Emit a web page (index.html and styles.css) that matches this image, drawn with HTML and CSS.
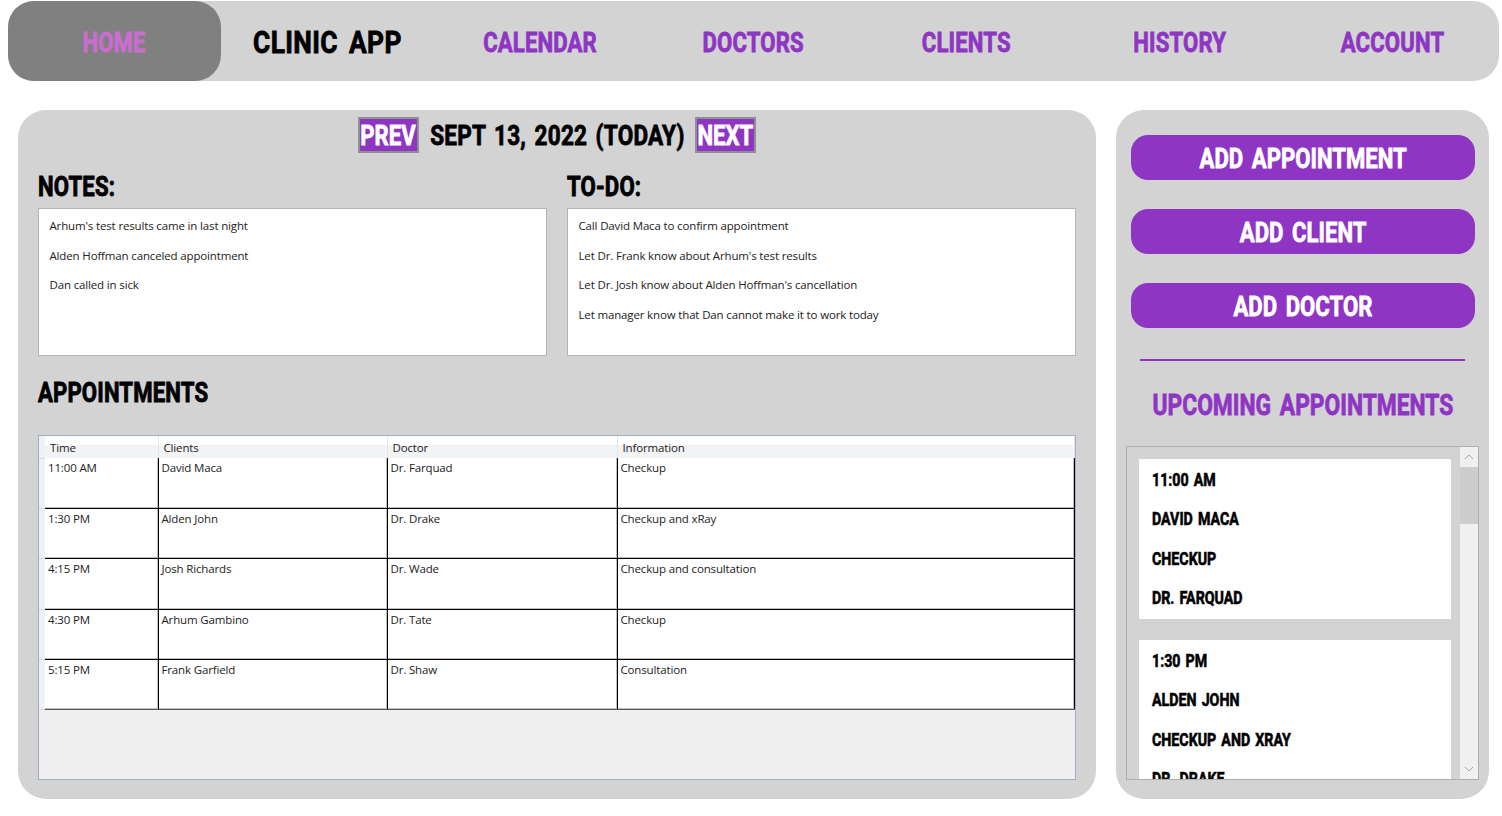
FILE: index.html
```html
<!DOCTYPE html>
<html lang="en">
<head>
<meta charset="utf-8">
<title>Clinic App</title>
<link rel="stylesheet" href="styles.css">
</head>
<body>
<nav class="nav">
  <a class="nav-item active"><span class="sq">HOME</span></a>
  <a class="nav-item brand"><span class="sq">CLINIC APP</span></a>
  <a class="nav-item"><span class="sq">CALENDAR</span></a>
  <a class="nav-item"><span class="sq">DOCTORS</span></a>
  <a class="nav-item"><span class="sq">CLIENTS</span></a>
  <a class="nav-item"><span class="sq">HISTORY</span></a>
  <a class="nav-item"><span class="sq">ACCOUNT</span></a>
</nav>
<main class="content">
  <section class="panel main-panel">
    <div class="date-row">
      <button class="step"><span class="sq">PREV</span></button>
      <div class="date"><span class="sq date-text">SEPT 13, 2022 (TODAY)</span></div>
      <button class="step"><span class="sq">NEXT</span></button>
    </div>
    <div class="notes">
      <div class="note-col">
        <h2 class="heading"><span class="sq left">NOTES:</span></h2>
        <div class="note-box">
          <p>Arhum's test results came in last night</p>
          <p>Alden Hoffman canceled appointment</p>
          <p>Dan called in sick</p>
        </div>
      </div>
      <div class="note-col">
        <h2 class="heading"><span class="sq left">TO-DO:</span></h2>
        <div class="note-box">
          <p>Call David Maca to confirm appointment</p>
          <p>Let Dr. Frank know about Arhum's test results</p>
          <p>Let Dr. Josh know about Alden Hoffman's cancellation</p>
          <p>Let manager know that Dan cannot make it to work today</p>
        </div>
      </div>
    </div>
    <h2 class="heading appts"><span class="sq left">APPOINTMENTS</span></h2>
    <div class="grid-wrap">
      <table class="grid">
        <colgroup><col class="c0"><col class="c1"><col class="c2"><col class="c3"><col></colgroup>
        <thead>
          <tr><th class="rowhead"></th><th>Time</th><th>Clients</th><th>Doctor</th><th>Information</th></tr>
        </thead>
        <tbody>
          <tr class="r50"><td class="rowhead"></td><td>11:00 AM</td><td>David Maca</td><td>Dr. Farquad</td><td>Checkup</td></tr>
          <tr class="r50"><td class="rowhead"></td><td>1:30 PM</td><td>Alden John</td><td>Dr. Drake</td><td>Checkup and xRay</td></tr>
          <tr class="r51"><td class="rowhead"></td><td>4:15 PM</td><td>Josh Richards</td><td>Dr. Wade</td><td>Checkup and consultation</td></tr>
          <tr class="r50"><td class="rowhead"></td><td>4:30 PM</td><td>Arhum Gambino</td><td>Dr. Tate</td><td>Checkup</td></tr>
          <tr class="r50"><td class="rowhead"></td><td>5:15 PM</td><td>Frank Garfield</td><td>Dr. Shaw</td><td>Consultation</td></tr>
        </tbody>
      </table>
    </div>
  </section>
  <aside class="panel side-panel">
    <button class="action"><span class="sq">ADD APPOINTMENT</span></button>
    <button class="action"><span class="sq">ADD CLIENT</span></button>
    <button class="action"><span class="sq">ADD DOCTOR</span></button>
    <hr class="rule">
    <h2 class="upcoming"><span class="sq">UPCOMING APPOINTMENTS</span></h2>
    <div class="list-box">
      <div class="list">
        <div class="card">
          <p><span class="sq left">11:00 AM</span></p><p><span class="sq left">DAVID MACA</span></p><p><span class="sq left">CHECKUP</span></p><p><span class="sq left">DR. FARQUAD</span></p>
        </div>
        <div class="card">
          <p><span class="sq left">1:30 PM</span></p><p><span class="sq left">ALDEN JOHN</span></p><p><span class="sq left">CHECKUP AND XRAY</span></p><p><span class="sq left">DR. DRAKE</span></p>
        </div>
      </div>
      <div class="scrollbar">
        <div class="sb-btn"><svg width="10" height="6" viewBox="0 0 10 6"><path d="M1 5l4-4 4 4" fill="none" stroke="#a6a6a6" stroke-width="1"/></svg></div>
        <div class="sb-thumb"></div>
        <div class="sb-track"></div>
        <div class="sb-btn"><svg width="10" height="6" viewBox="0 0 10 6"><path d="M1 1l4 4 4-4" fill="none" stroke="#a6a6a6" stroke-width="1"/></svg></div>
      </div>
    </div>
  </aside>
</main>
</body>
</html>
```
FILE: styles.css
```css
* { box-sizing: border-box; }
html, body { margin: 0; height: 100%; }
body {
  background: #fff;
  padding: 1px 3px 0 8px;
  overflow: hidden;
  font-family: "Roboto", "Liberation Sans", sans-serif;
  font-weight: 700;
}
p, h2 { margin: 0; }

/* The display face is narrower than anything installed: condense it. */
.sq {
  display: inline-block;
  flex: none;
  white-space: nowrap;
  transform: scaleX(0.79);
}
.sq.left { transform-origin: left center; }

.nav {
  display: grid;
  grid-template-columns: repeat(7, 1fr);
  height: 80px;
  background: #d3d3d3;
  border-radius: 26px;
}
.nav-item {
  display: flex;
  align-items: center;
  justify-content: center;
  padding-top: 2px;
  font-size: 28px;
  color: #8e35c4;
  letter-spacing: 0.2px;
  -webkit-text-stroke: 0.8px currentColor;
}
.nav-item.active {
  background: #808080;
  color: #c96ed0;
  border-radius: 26px;
}
.nav-item.brand {
  color: #000;
  font-size: 31px;
  word-spacing: 5px;
  letter-spacing: 0.4px;
}
.nav-item.brand .sq { transform: scaleX(0.85); }

.content {
  display: grid;
  grid-template-columns: 1078px 373px;
  grid-template-rows: 689px;
  column-gap: 20px;
  margin: 29px 0 0 10px;
  height: 689px;
}
.panel {
  background: #d3d3d3;
  border-radius: 28px;
}

.main-panel {
  padding: 7px 20px 0;
  display: flex;
  flex-direction: column;
}
.date-row {
  display: flex;
  align-items: center;
  justify-content: center;
  gap: 10px;
  height: 36px;
}
.step {
  display: flex;
  align-items: center;
  justify-content: center;
  width: 61px;
  height: 36px;
  padding: 0;
  background: #8e35c4;
  color: #fff;
  border: 2px solid #8f8f8f;
  font: inherit;
  font-size: 28px;
  -webkit-text-stroke: 0.8px currentColor;
}
.date {
  display: flex;
  justify-content: center;
  width: 256px;
  padding-top: 2px;
  font-size: 27px;
  color: #000;
  letter-spacing: 0.3px;
  word-spacing: 3px;
  -webkit-text-stroke: 0.8px currentColor;
}
.date-text { transform: scaleX(0.835); }
.notes {
  display: grid;
  grid-template-columns: 1fr 1fr;
  column-gap: 20px;
  margin-top: 18px;
}
.heading {
  font-size: 28px;
  font-weight: 700;
  line-height: 32px;
  color: #000;
  letter-spacing: 0.2px;
  -webkit-text-stroke: 0.9px currentColor;
}
.note-box {
  height: 148px;
  margin-top: 5px;
  padding: 3px 10.5px;
  background: #fff;
  border: 1px solid #b4b4b4;
  font-family: "Open Sans", sans-serif;
  font-weight: 400;
  font-size: 11.5px;
  letter-spacing: -0.15px;
  color: #222;
}
.note-box p {
  height: 29.5px;
  line-height: 27px;
}
.appts { margin-top: 21px; }

.grid-wrap {
  margin-top: 26px;
  height: 345px;
  background: #efefef;
  border: 1px solid #9fb0c6;
  font-family: "Open Sans", sans-serif;
  font-weight: 400;
}
.grid {
  border-collapse: collapse;
  table-layout: fixed;
  width: 100%;
  font-size: 11.5px;
  letter-spacing: -0.15px;
  color: #222;
}
.c0 { width: 6px; }
.c1 { width: 113px; }
.c2 { width: 229px; }
.c3 { width: 230px; }
.grid th {
  height: 22px;
  padding: 1px 0 0 5px;
  font-weight: 400;
  text-align: left;
  background: linear-gradient(#fff 0, #fff 40%, #f2f3f5 40%, #f2f3f5 100%);
  border-right: 1px solid #e3e5e8;
}
.grid th.rowhead, .grid td.rowhead {
  background: #f0f1f3;
  border: 0;
  border-bottom: 1px solid #d8d8d8;
  box-shadow: none;
  padding: 0;
}
.grid td {
  padding: 0 3px;
  vertical-align: top;
  background: #fff;
  line-height: 19px;
  border-right: 1px solid #000;
  border-bottom: 1px solid #000;
  box-shadow: inset -1px -1px 0 rgba(0, 0, 0, 0.25);
}
.grid tbody tr:last-child td:not(.rowhead) { border-bottom-color: #555; }
.r50 { height: 50px; }
.r51 { height: 51px; }

.side-panel {
  padding: 25px 14px 0 15px;
  display: flex;
  flex-direction: column;
  align-items: stretch;
}
.action {
  display: flex;
  align-items: center;
  justify-content: center;
  height: 45px;
  margin-bottom: 29px;
  padding: 2px 0 0;
  background: #8e35c4;
  color: #fff;
  border: 0;
  border-radius: 17px;
  font: inherit;
  font-size: 28px;
  word-spacing: 4px;
  -webkit-text-stroke: 0.8px currentColor;
}
.rule {
  width: 325px;
  height: 2px;
  margin: 2px 0 0 9px;
  background: #8e35c4;
  border: 0;
}
.upcoming {
  display: flex;
  justify-content: center;
  margin-top: 24px;
  font-size: 30px;
  line-height: 40px;
  font-weight: 700;
  color: #8e35c4;
  word-spacing: 4px;
  -webkit-text-stroke: 0.8px currentColor;
}
.upcoming .sq { transform: scaleX(0.76); }
.list-box {
  display: flex;
  justify-content: space-between;
  height: 334px;
  margin: 21px -4px 0 -5px;
  border: 1px solid #aeaeae;
  overflow: hidden;
}
.list {
  width: 312px;
  margin-left: 12px;
  padding-top: 12px;
  overflow: hidden;
}
.card {
  height: 160px;
  margin-bottom: 21px;
  padding: 0 13px;
  background: #fff;
  font-size: 18px;
  color: #000;
  word-spacing: 2px;
  -webkit-text-stroke: 0.6px currentColor;
}
.card p {
  height: 39.4px;
  line-height: 41px;
}
.scrollbar {
  width: 18px;
  display: flex;
  flex-direction: column;
  background: #f0f0f0;
}
.sb-btn {
  height: 20px;
  flex: none;
  display: flex;
  align-items: center;
  justify-content: center;
}
.sb-thumb { height: 57px; background: #cdcdcd; }
.sb-track { flex: 1; }
```
